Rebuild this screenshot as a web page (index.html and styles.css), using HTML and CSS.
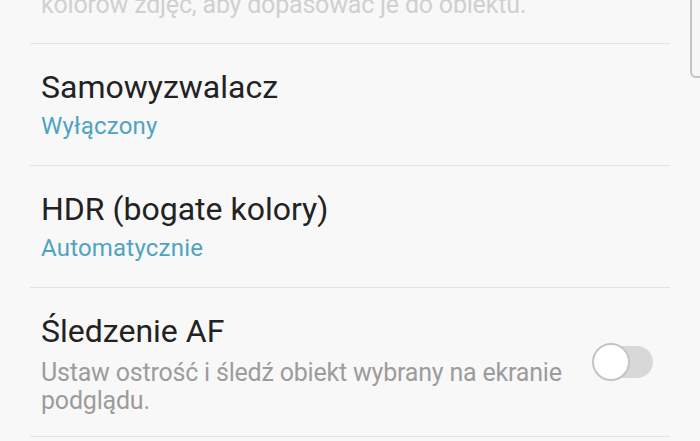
FILE: index.html
```html
<!DOCTYPE html>
<html lang="pl">
<head>
    <meta charset="UTF-8">
    <meta name="viewport" content="width=device-width, initial-scale=1.0">
    <title>Ustawienia aparatu</title>
    <link rel="stylesheet" href="styles.css">
</head>
<body>
    <div class="settings">
        <div class="item item-cut">
            <div class="item-text">
                <p class="desc faded">kolorów zdjęć, aby dopasować je do obiektu.</p>
            </div>
        </div>

        <div class="item">
            <div class="item-text">
                <h3 class="title">Samowyzwalacz</h3>
                <p class="value">Wyłączony</p>
            </div>
        </div>

        <div class="item">
            <div class="item-text">
                <h3 class="title">HDR (bogate kolory)</h3>
                <p class="value">Automatycznie</p>
            </div>
        </div>

        <div class="item item-switch">
            <div class="item-text">
                <h3 class="title">Śledzenie AF</h3>
                <p class="desc">Ustaw ostrość i śledź obiekt wybrany na ekranie podglądu.</p>
            </div>
            <div class="switch"><span class="thumb"></span></div>
        </div>
    </div>

    <div class="scroll-hint"></div>
</body>
</html>
```

FILE: styles.css
```css
body {
    font-family: Roboto, "Noto Sans", sans-serif;
    background-color: #f8f8f8;
    margin: 0;
    padding: 0;
    overflow: hidden;
}
.settings {
    margin: 0 30px;
}
.item {
    display: flex;
    align-items: center;
    gap: 20px;
    padding: 25px 17px 25px 11px;
    border-bottom: 1px solid #e3e3e3;
}
.item-cut {
    margin-top: -9px;
    padding-top: 0;
    padding-bottom: 24px;
}
.item-cut .desc {
    margin-top: 0;
}
.item-switch {
    padding-bottom: 21px;
}
.item-text {
    flex: 1;
}
.title {
    margin: 0;
    font-size: 32px;
    line-height: 36px;
    font-weight: 400;
    color: #222;
}
.value {
    margin: 7px 0 0;
    font-size: 24px;
    line-height: 28px;
    letter-spacing: 0.2px;
    color: #4fa3c3;
}
.desc {
    margin: 10px 0 0;
    font-size: 25px;
    line-height: 28px;
    letter-spacing: -0.2px;
    color: #9c9c9c;
}
.desc.faded {
    color: #d0d0d0;
}
.switch {
    position: relative;
    width: 58px;
    height: 32px;
    margin-bottom: 4px;
    border-radius: 16px;
    background-color: #d8d8d8;
    flex: 0 0 auto;
}
.thumb {
    position: absolute;
    left: -3px;
    top: -3px;
    width: 34px;
    height: 34px;
    border-radius: 50%;
    background-color: #fff;
    border: 2px solid #c4c4c4;
}
.scroll-hint {
    position: absolute;
    top: -10px;
    right: -10px;
    width: 16px;
    height: 84px;
    border: 2px solid #c2c2c2;
    border-radius: 6px;
    background-color: #f6f6f6;
}
```
